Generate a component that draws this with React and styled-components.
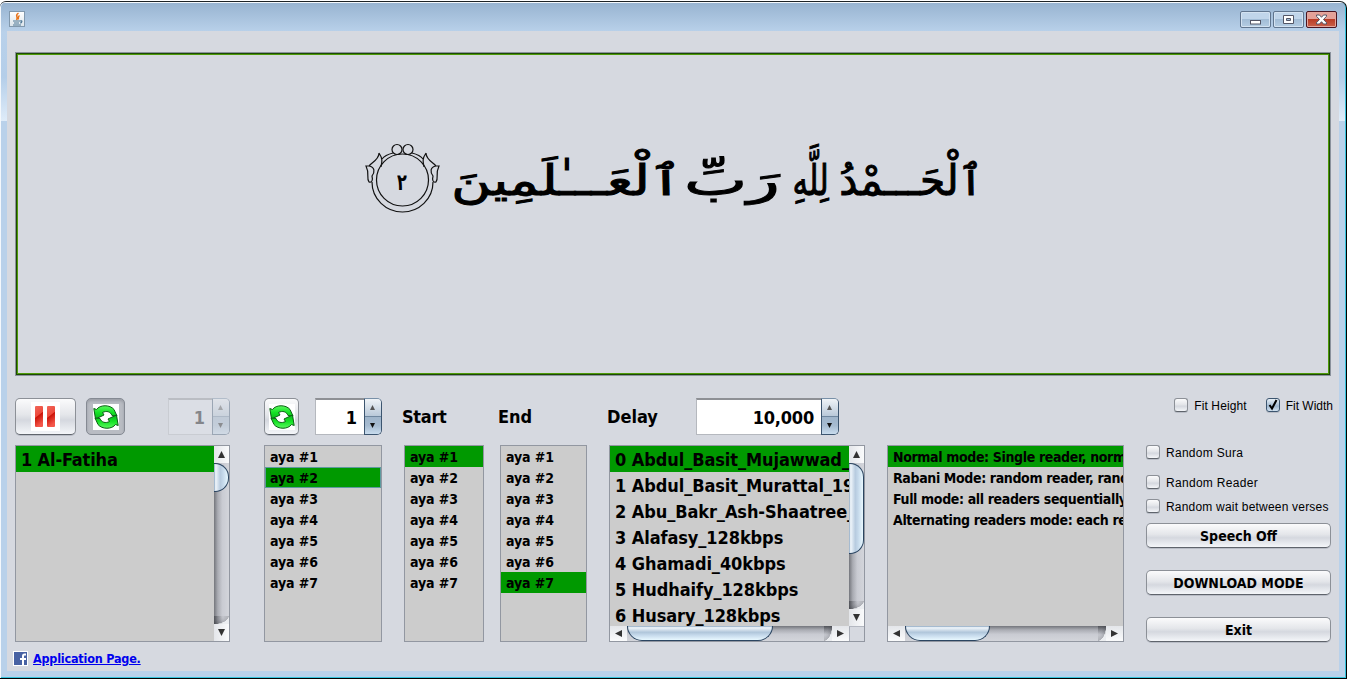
import React from "react";
import styled, { createGlobalStyle, css } from "styled-components";

const Global = createGlobalStyle`
  * { box-sizing: border-box; }
  html, body { margin: 0; padding: 0; overflow: hidden; background: #fff; }
`;

const tahoma = css`
  font-family: "DejaVu Sans Condensed", "DejaVu Sans", sans-serif;
  font-stretch: condensed;
  font-weight: 700;
  color: #000;
  white-space: pre;
`;

const Page = styled.div`
  width: 1348px;
  height: 679px;
  padding: 1px 1px 0 0;
  background: #fff;
`;

const Frame = styled.div`
  display: flex;
  flex-direction: column;
  width: 1347px;
  height: 678px;
  padding-left: 1px;
  border-top: 1px solid #1d2326;
  border-right: 1px solid #000;
  border-bottom: 1px solid #000;
  border-radius: 6px 7px 0 0;
  box-shadow: inset 1px 0 0 #f4f8fc, inset -1px -1px 0 #35c3dc;
  background: linear-gradient(#f4f8fc 0 1px, #98b4d1 1px, #b9d1ea 30px, #b4cee9 75px, #dfecf9 119px) 0 0 / 100% 119px no-repeat,
    linear-gradient(#b9d1ea, #b9d1ea);
`;

const TitleBar = styled.header`
  display: flex;
  align-items: flex-start;
  justify-content: space-between;
  height: 29px;
  padding: 9px 9px 0 8px;
`;

const JavaBox = styled.div`
  width: 16px;
  height: 16px;
  background: linear-gradient(#fff, #dce4ea);
  border: 1px solid #8198ad;
  svg { display: block; }
`;

const WindowButtons = styled.div`
  display: flex;
  gap: 2px;
`;

const WindowButton = styled.div`
  display: flex;
  align-items: center;
  justify-content: center;
  width: 31px;
  height: 17px;
  border: 1px solid ${(p) => (p.$close ? "#4b1420" : "#60758e")};
  border-radius: 2px;
  box-shadow: inset 0 0 0 1px ${(p) => (p.$close ? "#e3a79e" : "#d3e2f1")};
  background: ${(p) =>
    p.$close
      ? "linear-gradient(#e4a198 0 45%, #b83a24 46%, #c9614b)"
      : "linear-gradient(#c0d5ea 0 45%, #a0bbd5 46%, #b5cde3)"};
`;

const Content = styled.main`
  width: 1332px;
  height: 640px;
  margin-left: 6px;
  padding: 21px 8px 0;
  background: #d6d9e0;
`;

const VersePanel = styled.section`
  display: flex;
  align-items: flex-start;
  width: 1316px;
  height: 324px;
  padding: 89px 0 0 348px;
  border: 1px solid #8a919c;
  box-shadow: inset 0 0 0 1px #1c4a02, inset 0 0 0 2px #4d9a08;
`;

const Medallion = styled.div`
  display: grid;
  width: 76px;
  height: 76px;
  margin-right: 14px;
  > * { grid-area: 1 / 1; }
  svg { display: block; }
`;

const VerseNumber = styled.span`
  place-self: center;
  padding-top: 4px;
  font: 700 23px/28px "DejaVu Sans", sans-serif;
  transform: scaleX(0.7);
`;

const Verse = styled.div`
  display: flex;
  direction: rtl;
  height: 80px;
  margin-top: -3px;
`;

const Word = styled.span`
  display: flex;
  justify-content: center;
  width: ${(p) => p.$width}px;
  margin-left: ${(p) => p.$gap || 0}px;
  font: 400 42px/84px "DejaVu Sans", sans-serif;
  white-space: nowrap;
  color: #000;
  -webkit-text-stroke: 1px #000;
  > span { transform: scaleX(${(p) => p.$stretch || 1}); }
`;

const Controls = styled.section`
  display: flex;
  height: 244px;
  margin-top: 22px;
`;

const Column = styled.div`
  display: flex;
  flex-direction: column;
  width: ${(p) => p.$width}px;
  margin-right: ${(p) => p.$gap || 0}px;
`;

const Head = styled.div`
  display: flex;
  align-items: flex-start;
  justify-content: space-between;
  height: 47px;
  padding-right: ${(p) => p.$inset || 0}px;
`;

const ButtonPair = styled.div`
  display: flex;
  gap: 10px;
`;

const raised = css`
  background: linear-gradient(#fbfbfc, #e4e6ea 45%, #d5d8df 60%, #f4f6f9);
  border: 1px solid #8c9097;
  border-bottom-color: #5f646c;
  box-shadow: 0 1px 0 #b9bdc6;
`;

const pressed = css`
  background: #b9bcc3;
  border-color: #858a93;
  box-shadow: inset 0 2px 3px #9b9ea6;
`;

const IconButton = styled.div`
  display: flex;
  align-items: center;
  justify-content: center;
  width: ${(p) => p.$width}px;
  height: 37px;
  border-radius: 5px;
  ${raised}
  ${(p) => p.$pressed && pressed}
  svg { display: block; background: #fff; }
`;

const SpinnerBox = styled.div`
  display: flex;
  width: ${(p) => p.$width}px;
  height: 37px;
  opacity: ${(p) => (p.$disabled ? 0.38 : 1)};
`;

const SpinnerField = styled.div`
  ${tahoma}
  flex: 1;
  padding-right: 7px;
  background: ${(p) => (p.$disabled ? "#e4e8ee" : "#fff")};
  border: 1px solid #b5b8be;
  border-top: 2px solid #8e9095;
  border-right: 0;
  text-align: right;
  font-size: 18px;
  line-height: 35px;
  letter-spacing: ${(p) => p.$spacing || 0}px;
`;

const SpinnerArrows = styled.div`
  display: flex;
  flex-direction: column;
  width: 18px;
  border: 1px solid #3c556f;
  border-top-color: #7890a8;
  border-radius: 0 5px 5px 0;
  overflow: hidden;
`;

const SpinnerArrow = styled.div`
  display: flex;
  flex: 1;
  align-items: center;
  justify-content: center;
  padding-right: 1px;
  background: ${(p) => (p.$down ? "linear-gradient(#9fb5cb, #a6bbd0 50%, #c8dcee)" : "linear-gradient(#eff3f7, #b9c9d9)")};
  border-top: ${(p) => (p.$down ? "1px solid #6f879f" : "0")};
`;

const HeadLabel = styled.div`
  ${tahoma}
  margin-left: -2px;
  font-size: 18px;
  line-height: 37px;
  letter-spacing: ${(p) => p.$spacing || 0}px;
`;

const ListBox = styled.div`
  display: grid;
  grid-template-columns: minmax(0, 1fr) auto;
  grid-template-rows: minmax(0, 1fr) auto;
  height: 197px;
  border: 1px solid #9297a1;
  background: #ccc;
`;

const Items = styled.div`
  overflow: hidden;
`;

const Item = styled.div`
  ${tahoma}
  height: ${(p) => (p.$large ? 26 : 21)}px;
  padding: 1px 0 0 5px;
  overflow: hidden;
  background: ${(p) => (p.$selected ? "#009900" : "transparent")};
  outline: ${(p) => (p.$focused ? "1px solid #5e9a9e" : "0")};
  outline-offset: -1px;
  font-size: ${(p) => (p.$large ? 18 : 14)}px;
  line-height: ${(p) => (p.$large ? 26 : 21)}px;
  letter-spacing: ${(p) => p.$spacing || 0}px;
`;

const VBar = styled.div`
  display: flex;
  flex-direction: column;
  width: 15px;
  background: linear-gradient(90deg, #74767c, #a9abb2 25%, #c9cbd2 55%, #d3d5db);
`;

const HBar = styled.div`
  display: flex;
  height: 15px;
  background: linear-gradient(#74767c, #a9abb2 25%, #c9cbd2 55%, #d3d5db);
`;

const Arrow = styled.div`
  display: flex;
  align-items: center;
  justify-content: center;
  width: ${(p) => (p.$wide ? 17 : 15)}px;
  height: ${(p) => (p.$tall ? 17 : 15)}px;
  flex: none;
  background: linear-gradient(${(p) => (p.$tall ? "90deg" : "180deg")}, #e4e6ea, #fafbfc);
`;

const VThumb = styled.div`
  flex: none;
  height: ${(p) => p.$length}px;
  border: 1px solid #2b4561;
  border-left: 0;
  border-radius: 0 14px 14px 0;
  background: linear-gradient(90deg, #86a2be, #f0f6fb 12%, #b7cbdf 45%, #c5d9eb 65%, #e8f8ff);
`;

const HThumb = styled.div`
  flex: none;
  width: ${(p) => p.$length}px;
  border: 1px solid #2b4561;
  border-top: 0;
  border-radius: 0 0 16px 16px;
  background: linear-gradient(#86a2be, #f0f6fb 12%, #b0c6da 45%, #c5d9eb 65%, #e8f8ff);
`;

const Spacer = styled.div`
  flex: 1;
`;

const TrackEnd = styled.div`
  flex: none;
  width: ${(p) => (p.$wide ? 8 : 15)}px;
  height: ${(p) => (p.$wide ? 15 : 8)}px;
  background: linear-gradient(${(p) => (p.$wide ? "180deg" : "90deg")}, rgba(40, 42, 48, 0.45), transparent 60%),
    radial-gradient(${(p) => (p.$wide ? "8px 15px" : "15px 8px")} at 0 0, transparent 50%, rgba(40, 42, 48, 0.2) 97%, #eceef1 100%);
`;

const Corner = styled.div`
  background: #d6d9e0;
  border-left: 1px solid #a9adb7;
  border-top: 1px solid #b4b8c1;
`;

const CheckRow = styled.div`
  display: flex;
  align-items: center;
  gap: 6px;
  height: 14px;
  margin-top: ${(p) => p.$top || 0}px;
  color: #000;
  font: 400 12px/14px "Liberation Sans", Arial, sans-serif;
  letter-spacing: ${(p) => p.$spacing || 0}px;
  white-space: nowrap;
  > span:last-child { padding-top: 1px; }
`;

const Box = styled.span`
  display: flex;
  align-items: center;
  justify-content: center;
  width: 14px;
  height: 14px;
  border-radius: 3px;
  ${raised}
  ${(p) => p.$checked && "background: linear-gradient(#e8f0f7, #9fb7cf 60%, #d2e2f0); border-color: #3c556f;"}
`;

const WideButton = styled.div`
  ${tahoma}
  height: 25px;
  margin-top: ${(p) => p.$top}px;
  ${raised}
  border-radius: 5px;
  text-align: center;
  font-size: 14px;
  line-height: 24px;
  letter-spacing: ${(p) => p.$spacing || 0}px;
`;

const FitRow = styled.div`
  display: flex;
  justify-content: flex-end;
  gap: 19px;
  width: 187px;
`;

const Footer = styled.footer`
  display: flex;
  align-items: center;
  gap: 5px;
  height: 16px;
  margin: 8px 0 0 -2px;
  svg { display: block; }
`;

const FacebookBox = styled.span`
  width: 15px;
  height: 15px;
  border: 1px solid #fff;
  background: #4862a3;
`;

const PageLink = styled.a`
  font: 700 12.5px/16px "DejaVu Sans Condensed", "DejaVu Sans", sans-serif;
  font-stretch: condensed;
  letter-spacing: -0.2px;
  padding-top: 1px;
  color: #0000ee;
  text-decoration: underline;
  text-underline-offset: 1px;
`;

const paths = {
  up: "M0 8 4 0 8 8z",
  down: "M0 0H8L4 8z",
  left: "M8 0V8L0 4z",
  right: "M0 0 8 4 0 8z",
};

const Triangle = ({ dir, size = 8, color = "#333" }) => (
  <svg width={size} height={size} viewBox="0 0 8 8">
    <path d={paths[dir]} fill={color} />
  </svg>
);

const Recycle = () => (
  <svg width="26" height="26" viewBox="0 0 26 26">
    <defs>
      <linearGradient id="leaf" x1="0" y1="0" x2="0" y2="1">
        <stop offset="0" stopColor="#5cf860" />
        <stop offset="0.5" stopColor="#16e326" />
        <stop offset="1" stopColor="#08b818" />
      </linearGradient>
    </defs>
    {[0, 180].map((angle) => (
      <g key={angle} transform={`rotate(${angle} 13 13)`}>
        <path
          d="M0.8 4.5 3.5 5.5C7 0.5 17 0.5 21 5.5L24 12 19 11.5C17.5 7.5 13.5 6.5 9.5 8.5L11 11 2.5 15Z"
          fill="url(#leaf)"
          stroke="#0a5f14"
          strokeLinejoin="round"
        />
      </g>
    ))}
  </svg>
);

const Pause = () => (
  <svg width="29" height="29" viewBox="0 0 29 29">
    <defs>
      <linearGradient id="red" x1="0" y1="0" x2="0.3" y2="1">
        <stop offset="0" stopColor="#f0675b" />
        <stop offset="0.5" stopColor="#ee4a3c" />
        <stop offset="0.55" stopColor="#cc1409" />
        <stop offset="1" stopColor="#f4574a" />
      </linearGradient>
    </defs>
    <rect x="4" y="4" width="8" height="21" rx="1" fill="url(#red)" />
    <rect x="16" y="4" width="8" height="21" rx="1" fill="url(#red)" />
  </svg>
);

const Spinner = ({ width, value, disabled, spacing }) => (
  <SpinnerBox $width={width} $disabled={disabled}>
    <SpinnerField $disabled={disabled} $spacing={spacing}>{value}</SpinnerField>
    <SpinnerArrows>
      <SpinnerArrow><Triangle dir="up" size={5} color="#555" /></SpinnerArrow>
      <SpinnerArrow $down><Triangle dir="down" size={5} color="#111" /></SpinnerArrow>
    </SpinnerArrows>
  </SpinnerBox>
);

const VerticalBar = ({ length }) => (
  <VBar>
    <Arrow $tall><Triangle dir="up" size={7} /></Arrow>
    <VThumb $length={length} />
    <Spacer />
    <TrackEnd />
    <Arrow $tall><Triangle dir="down" size={7} /></Arrow>
  </VBar>
);

const HorizontalBar = ({ length }) => (
  <HBar>
    <Arrow $wide><Triangle dir="left" size={7} /></Arrow>
    <HThumb $length={length} />
    <Spacer />
    <TrackEnd $wide />
    <Arrow $wide><Triangle dir="right" size={7} /></Arrow>
  </HBar>
);

const List = ({ items, selected, focused, large, spacing, vertical, horizontal }) => (
  <ListBox>
    <Items>
      {items.map((text, i) => (
        <Item key={text} $large={large} $spacing={spacing} $selected={i === selected} $focused={focused && i === selected}>
          {text}
        </Item>
      ))}
    </Items>
    {vertical ? <VerticalBar length={vertical} /> : <span />}
    {horizontal && <HorizontalBar length={horizontal} />}
    {horizontal && vertical && <Corner />}
  </ListBox>
);

const Check = ({ label, checked, top, spacing }) => (
  <CheckRow $top={top} $spacing={spacing}>
    <Box $checked={checked}>
      {checked && (
        <svg width="10" height="12" viewBox="0 0 10 12">
          <path d="M1.5 6 4 9.5 8.5 1" fill="none" stroke="#000" strokeWidth="2" />
        </svg>
      )}
    </Box>
    <span>{label}</span>
  </CheckRow>
);

const ayas = [1, 2, 3, 4, 5, 6, 7].map((n) => `aya #${n}`);

const readers = [
  "0 Abdul_Basit_Mujawwad_128kbps",
  "1 Abdul_Basit_Murattal_192kbps",
  "2 Abu_Bakr_Ash-Shaatree_128kbps",
  "3 Alafasy_128kbps",
  "4 Ghamadi_40kbps",
  "5 Hudhaify_128kbps",
  "6 Husary_128kbps",
];

const modes = [
  "Normal mode: Single reader, normal order",
  "Rabani Mode: random reader, random aya",
  "Full mode: all readers sequentially",
  "Alternating readers mode: each reader",
];

export default function App() {
  return (
    <Page>
      <Global />
      <Frame>
        <TitleBar>
          <JavaBox>
            <svg width="14" height="14" viewBox="0 0 14 14" fill="none">
              <path d="M8.5 1C4 4 9 4.5 6.5 8M9.5 3.5C7.5 5 9 5.5 8 7.5" stroke="#e8741c" strokeWidth="1.5" />
              <path d="M3 9H10M4 11H9M3 13H11M10 9C13 8 12 11 10 11" stroke="#4f7896" strokeWidth="1.2" />
            </svg>
          </JavaBox>
          <WindowButtons>
            <WindowButton>
              <svg width="12" height="11" viewBox="0 0 12 11">
                <rect x="0.5" y="6.5" width="10" height="3.5" fill="#fff" stroke="#535666" />
              </svg>
            </WindowButton>
            <WindowButton>
              <svg width="12" height="11" viewBox="0 0 12 11">
                <path d="M0.5 1.5H10.5V9.5H0.5ZM3.5 4.5V6.5H7.5V4.5Z" fill="#fff" stroke="#535666" fillRule="evenodd" />
              </svg>
            </WindowButton>
            <WindowButton $close>
              <svg width="12" height="11" viewBox="0 0 12 11">
                <path d="M0.5 1H3.5L5.5 3.3 7.5 1H10.5V2.3L7.5 5.5 10.5 8.7V10H7.5L5.5 7.7 3.5 10H0.5V8.7L3.5 5.5 0.5 2.3Z" fill="#fff" stroke="#535666" />
              </svg>
            </WindowButton>
          </WindowButtons>
        </TitleBar>
        <Content>
          <VersePanel>
            <Medallion>
              <svg width="76" height="76" viewBox="0 0 76 76" fill="none" stroke="#111" strokeWidth="1.2">
                <circle cx="38.5" cy="38" r="26" />
                <path d="M8 40C8 57 22 70 38.5 70S69 57 69 40" />
                <circle cx="33" cy="7.5" r="5" />
                <circle cx="44" cy="7.5" r="5" />
                <path d="M29 11C25 12 21 13 18 17M48 11C52 12 56 13 59 17" />
                <path d="M15 11C15 18 7 21 5 24C11 25 11 30 8 34C9 38 8 41 5 40C2 36 6 32 2 24L5 24M15 11C19 17 18 20 17 25" />
                <path d="M62 11C62 18 70 21 72 24C66 25 66 30 69 34C68 38 69 41 72 40C75 36 71 32 75 24L72 24M62 11C58 17 59 20 60 25" />
              </svg>
              <VerseNumber>٢</VerseNumber>
            </Medallion>
            <Verse lang="ar">
              <Word $width={138} $gap={11} $stretch={0.97}><span>ٱلْحَـــمْدُ</span></Word>
              <Word $width={40} $gap={10} $stretch={0.74}><span>لِلَّهِ</span></Word>
              <Word $width={98} $gap={4} $stretch={1.6}><span>رَبِّ</span></Word>
              <Word $width={225} $stretch={1.3}><span>ٱلْعَـــٰلَمِينَ</span></Word>
            </Verse>
          </VersePanel>
          <Controls>
            <Column $width={215} $gap={34}>
              <Head>
                <ButtonPair>
                  <IconButton $width={61}><Pause /></IconButton>
                  <IconButton $width={39} $pressed><Recycle /></IconButton>
                </ButtonPair>
                <Spinner width={62} value="1" disabled />
              </Head>
              <List items={["1 Al-Fatiha"]} selected={0} large spacing={-0.15} vertical={29} />
            </Column>
            <Column $width={118} $gap={22}>
              <Head>
                <IconButton $width={35}><Recycle /></IconButton>
                <Spinner width={67} value="1" />
              </Head>
              <List items={ayas} selected={1} focused spacing={-0.1} />
            </Column>
            <Column $width={80} $gap={16}>
              <Head><HeadLabel $spacing={-0.3}>Start</HeadLabel></Head>
              <List items={ayas} selected={0} spacing={-0.1} />
            </Column>
            <Column $width={87} $gap={22}>
              <Head><HeadLabel>End</HeadLabel></Head>
              <List items={ayas} selected={6} spacing={-0.1} />
            </Column>
            <Column $width={256} $gap={22}>
              <Head $inset={26}>
                <HeadLabel>Delay</HeadLabel>
                <Spinner width={143} value="10,000" spacing={-0.2} />
              </Head>
              <List items={readers} selected={0} large spacing={-0.08} vertical={91} horizontal={146} />
            </Column>
            <Column $width={237} $gap={22}>
              <Head />
              <List items={modes} selected={0} spacing={-0.36} horizontal={85} />
            </Column>
            <Column $width={185}>
              <FitRow>
                <Check label="Fit Height" spacing={0.1} />
                <Check label="Fit Width" checked />
              </FitRow>
              <Check label="Random Sura" top={33} spacing={0.28} />
              <Check label="Random Reader" top={16} spacing={0.3} />
              <Check label="Random wait between verses" top={10} spacing={0.2} />
              <WideButton $top={10}>Speech Off</WideButton>
              <WideButton $top={22}>DOWNLOAD MODE</WideButton>
              <WideButton $top={22}>Exit</WideButton>
            </Column>
          </Controls>
          <Footer>
            <FacebookBox>
              <svg width="13" height="13" viewBox="0 0 13 13">
                <path d="M12 2.5H10.5Q9 2.5 9 4V13M6 7H12" fill="none" stroke="#fff" strokeWidth="2" />
              </svg>
            </FacebookBox>
            <PageLink>Application Page.</PageLink>
          </Footer>
        </Content>
      </Frame>
    </Page>
  );
}
